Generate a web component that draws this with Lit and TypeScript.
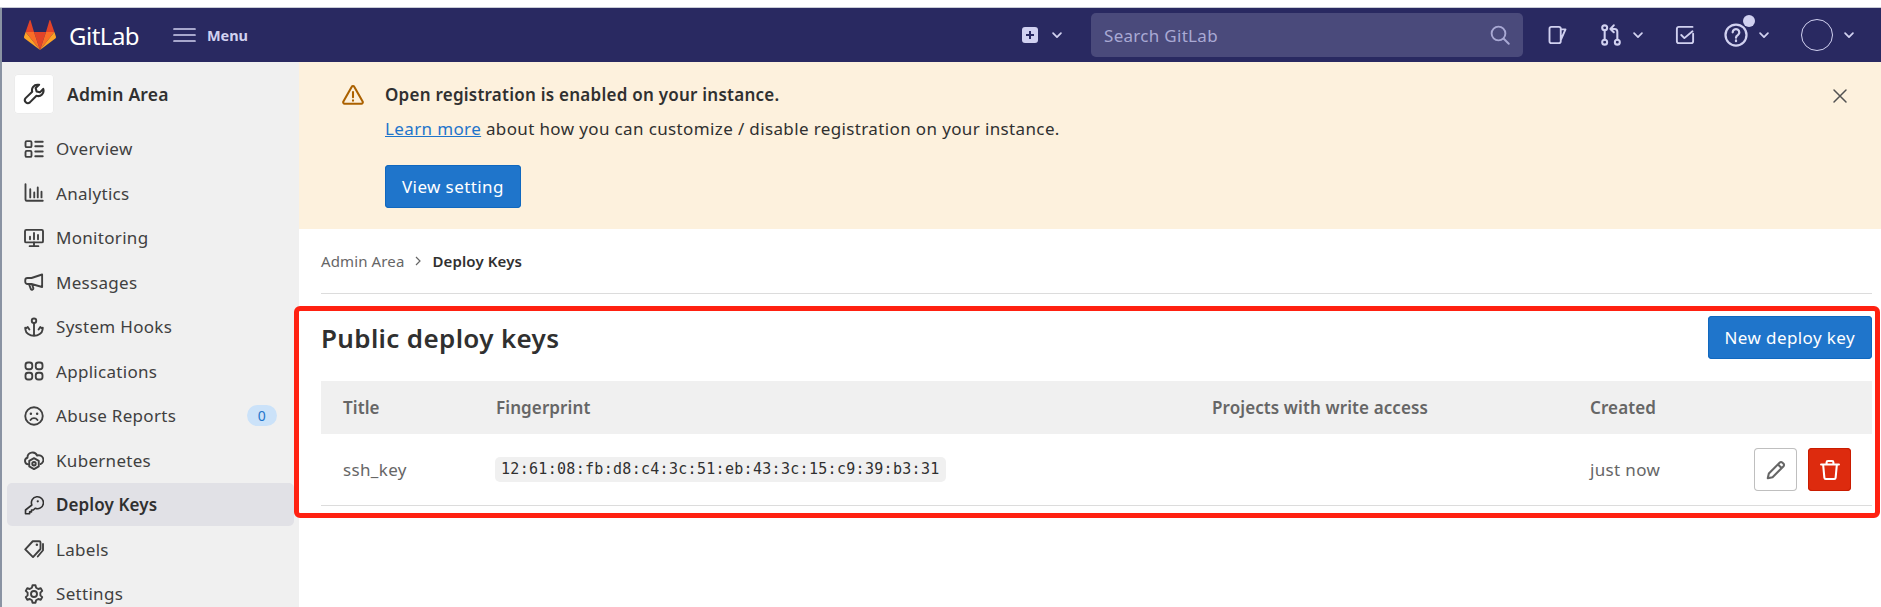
import { LitElement, html, css, svg } from "lit";
import { customElement } from "lit/decorators.js";

const ic: Record<string, unknown> = {
  wrench: svg`<path d="M10.6 1.3a3.9 3.9 0 0 0-3.9 5L1.9 11a2.2 2.2 0 0 0 3.1 3.1l4.8-4.8a3.9 3.9 0 0 0 4.9-5L12.3 6.8l-2.4-.7-.7-2.4 2.5-2.4a3.9 3.9 0 0 0-1.1 0z"/>`,
  overview: svg`<rect x="1.2" y="1.7" width="4.8" height="4.8" rx="1"/><rect x="1.2" y="9.5" width="4.8" height="4.8" rx="1"/><path d="M9 2.2h6M9 5.8h6M9 10h6M9 13.8h6"/>`,
  analytics: svg`<path d="M1.2 1v12.2a1 1 0 0 0 1 1H15M5 5v6.5M8.2 7.5v4M11 3.5v8M14 7v4.5"/>`,
  monitoring: svg`<rect x=".8" y="1.5" width="14.4" height="10" rx="1"/><path d="M4.5 14.5h7M8 11.5v3M4.8 9V7M8 9V4M11.2 9V5.5"/>`,
  messages: svg`<path d="M14.5 2 6 4.8H2.8A1.8 1.8 0 0 0 1 6.6v1.2a1.8 1.8 0 0 0 1.8 1.8H6l8.5 2.4zM4 9.7l1.5 4a1.1 1.1 0 0 0 2-.8L6.4 10"/>`,
  hooks: svg`<circle cx="8" cy="3" r="1.8"/><path d="M8 4.8V15M1 8.5l.2 1.8C1.5 13 4.5 15 8 15s6.5-2 6.8-4.7L15 8.5M1 9.5 3 8l1.3 2M15 9.5 13 8l-1.3 2"/>`,
  apps: svg`<rect x="1.2" y="1.2" width="5.4" height="5.4" rx="2"/><rect x="9.4" y="1.2" width="5.4" height="5.4" rx="2"/><rect x="1.2" y="9.4" width="5.4" height="5.4" rx="2"/><rect x="9.4" y="9.4" width="5.4" height="5.4" rx="2"/>`,
  abuse: svg`<circle cx="8" cy="8" r="7"/><path d="M5.2 11.2a3.4 3.4 0 0 1 5.6 0"/><path d="M5.5 6.2h.01M10.5 6.2h.01" stroke-width="2"/>`,
  kube: svg`<path d="M4 11.5H3.4a2.7 2.7 0 0 1-.6-5.3 4 4 0 0 1 7.7-1.7 3.4 3.4 0 0 1 2.7 6.8"/><path d="m8 6.5 3.8 2.2v4.4L8 15.3l-3.8-2.2V8.7z"/><circle cx="8" cy="11" r="1.4"/>`,
  key: svg`<path d="M6.3 8a4.8 4.8 0 1 1 2.6 2.6L7.5 12H6v1.5H4.5V15H1.2v-3z" stroke-width="1.3"/><path d="M11 5h.01" stroke-width="1.8"/>`,
  labels: svg`<path d="M1 8.3 7 1.8h5.2a1 1 0 0 1 1 1V8l-6 6.5z"/><path d="m11 14 4.2-5V4"/><path d="M10.3 4.5h.01" stroke-width="2"/>`,
  settings: svg`<circle cx="8" cy="8" r="2.4"/><path d="m6.8 1h2.4l.5 2 1.7 1 2-.6 1.2 2.1-1.5 1.4v2.2l1.5 1.4-1.2 2.1-2-.6-1.7 1-.5 2H6.8l-.5-2-1.7-1-2 .6-1.2-2.1 1.5-1.4V6.9L1.4 5.5l1.2-2.1 2 .6 1.7-1z"/>`,
  warn: svg`<path d="M7.1 2 1 12.8a1 1 0 0 0 .9 1.5h12.2a1 1 0 0 0 .9-1.5L8.9 2a1 1 0 0 0-1.8 0z"/><path d="M8 5.8v3.8M8 11.8v.4"/>`,
  close: svg`<path d="m2 2 12 12M14 2 2 14"/>`,
  search: svg`<circle cx="6.8" cy="6.8" r="5.5"/><path d="m11 11 4 4"/>`,
  chev: svg`<path d="m3.5 5.8 4.5 4.5 4.5-4.5" stroke-width="2"/>`,
  issues: svg`<path d="M2 3a1.5 1.5 0 0 1 1.5-1.5h6A1.5 1.5 0 0 1 11 3v10a1.5 1.5 0 0 1-1.5 1.5h-6A1.5 1.5 0 0 1 2 13zM11 3.5h3.8L11 12"/>`,
  mr: svg`<circle cx="3.4" cy="2.8" r="1.8"/><circle cx="3.4" cy="13.2" r="1.8"/><circle cx="12.6" cy="13.2" r="1.8"/><path d="M3.4 4.6v6.8M12.6 11.4V5.6a2 2 0 0 0-2-2H8M10 1 7.6 3.6 10 6"/>`,
  todo: svg`<path d="M14.5 7v6a1.5 1.5 0 0 1-1.5 1.5H3A1.5 1.5 0 0 1 1.5 13V3A1.5 1.5 0 0 1 3 1.5h11"/><path d="m5 8 2.5 2.5L14 5"/>`,
  help: svg`<circle cx="8" cy="8" r="7"/><path d="M5.8 6.2a2.2 2.2 0 1 1 3.4 1.9C8.4 8.6 8 9 8 9.8M8 11.6v.5"/>`,
  pencil: svg`<path d="M2 14l.8-3.5L10.8 2.5a1.2 1.2 0 0 1 1.7 0l1 1a1.2 1.2 0 0 1 0 1.7L5.5 13.2zM9.5 4l2.5 2.5"/>`,
  trash: svg`<path d="M1.5 4h13M5.5 4V2.5a1 1 0 0 1 1-1h3a1 1 0 0 1 1 1V4M3 4l.9 9.6a1 1 0 0 0 1 .9h6.2a1 1 0 0 0 1-.9L13 4"/>`,
};

const icon = (n: string, cls = "") =>
  html`<svg class="ico ${cls}" viewBox="0 0 16 16" fill="none" stroke="currentColor" stroke-width="1.5" stroke-linecap="round" stroke-linejoin="round">${ic[n]}</svg>`;

const NAV = [
  ["overview", "Overview"],
  ["analytics", "Analytics"],
  ["monitoring", "Monitoring"],
  ["messages", "Messages"],
  ["hooks", "System Hooks"],
  ["apps", "Applications"],
  ["abuse", "Abuse Reports"],
  ["kube", "Kubernetes"],
  ["key", "Deploy Keys"],
  ["labels", "Labels"],
  ["settings", "Settings"],
];

@customElement("app-root")
export class AppRoot extends LitElement {
  static styles = css`
    :host {
      display: block;
      position: relative;
      height: 607px;
      overflow: hidden;
      background: #fff;
      color: #303030;
      font-family: "Noto Sans", "Open Sans", sans-serif;
      font-size: 17px;
    }
    .ico { display: block; width: 20px; height: 20px; flex: none; }
    .strip { height: 7px; border-bottom: 1px solid #c9ccd6; box-sizing: content-box; }
    .frame { margin-left: 2px; box-shadow: -2px 0 0 #8a93a3; }

    .nav {
      height: 54px;
      background: #292961;
      color: #d1d1f0;
      display: flex;
      align-items: center;
      padding-left: 22px;
    }
    .logo { width: 32px; height: 30px; flex: none; }
    .word { color: #fff; font-size: 24px; margin-left: 13px; letter-spacing: -0.5px; width: 71px; }
    .burger { width: 24px; height: 16px; margin-left: 33px; flex: none; }
    .menu { font-size: 14.5px; font-weight: 700; margin-left: 10px; letter-spacing: -0.1px; }
    .spacer { flex: 1; }
    .plus { width: 16px; height: 16px; border-radius: 3px; background: #d1d1f0; color: #292961; position: relative; flex: none; }
    .plus svg { position: absolute; inset: 3px; width: 10px; height: 10px; }
    .chev { width: 14px; height: 14px; }
    .search {
      width: 432px;
      height: 44px;
      margin-left: 27px;
      box-sizing: border-box;
      background: #4a4a7b;
      border-radius: 5px;
      display: flex;
      align-items: center;
      justify-content: space-between;
      padding: 0 13px;
      color: #a9a9d4;
    }
    .search span { font-size: 17px; letter-spacing: 0.3px; }
    .i-issues { margin-left: 24px; }
    .i-mr { margin-left: 33px; width: 22px; height: 22px; }
    .i-todo { margin-left: 30px; }
    .help { position: relative; margin-left: 29px; width: 24px; height: 24px; flex: none; }
    .help svg { width: 24px; height: 24px; }
    .help::after {
      content: "";
      position: absolute;
      left: 19px;
      top: -8px;
      width: 12px;
      height: 12px;
      border-radius: 50%;
      background: #d1d1f0;
    }
    .avatar { width: 30px; height: 30px; border: 1px solid #d1d1f0; border-radius: 50%; margin-left: 30px; flex: none; }
    .mlc { margin-left: 9px; }
    .mlw { margin-left: 12px; }
    .mlh { margin-left: 9px; }
    .mle { margin-left: 9px; margin-right: 25px; }

    .body { display: flex; height: 545px; }
    .side {
      width: 297px;
      flex: none;
      background: #f0f0f0;
      padding: 12px 5px 0;
      box-sizing: border-box;
      overflow: hidden;
    }
    .ctx { display: flex; align-items: center; gap: 13px; padding-left: 7px; height: 40px; margin-bottom: 13px; }
    .tile {
      width: 40px;
      height: 40px;
      background: #fff;
      border-radius: 4px;
      display: flex;
      align-items: center;
      justify-content: center;
      box-shadow: 0 0 0 1px #ececec inset;
    }
    .tile svg { width: 22px; height: 22px; }
    .ctx b { font-weight: 600; font-size: 17.5px; letter-spacing: 0.2px; }
    .item {
      height: 43px;
      margin-bottom: 1.5px;
      display: flex;
      align-items: center;
      gap: 12px;
      padding: 0 17px;
      border-radius: 5px;
      color: #404040;
      letter-spacing: 0.3px;
    }
    .item.on { background: #e1e1e6; font-weight: 600; color: #303030; letter-spacing: 0.1px; }
    .badge {
      margin-left: auto;
      width: 30px;
      height: 21px;
      border-radius: 11px;
      background: #cbe2f9;
      color: #1f75cb;
      font-size: 14px;
      display: flex;
      align-items: center;
      justify-content: center;
    }

    main { flex: 1; min-width: 0; }
    .banner {
      height: 167px;
      box-sizing: border-box;
      background: #fdf1dd;
      padding: 16px 33px 0 43px;
      display: flex;
      gap: 21px;
    }
    .banner .warn { width: 22px; height: 22px; color: #ab6100; margin-top: 6px; }
    .bcol { flex: 1; }
    .btitle { font-weight: 600; line-height: 34px; letter-spacing: 0.24px; }
    .btext { line-height: 34px; letter-spacing: 0.37px; }
    .btext a { color: #1f75cb; text-decoration: underline; }
    .btn {
      display: inline-flex;
      align-items: center;
      height: 43px;
      box-sizing: border-box;
      padding: 0 17px;
      background: #1f75cb;
      color: #fff;
      border-radius: 4px;
      box-shadow: inset 0 0 0 1px #1068bf;
      letter-spacing: 0.4px;
    }
    .bcol .btn { margin-top: 19px; }
    .x { width: 16px; height: 16px; margin-top: 10px; color: #525252; }

    .wrap { padding: 0 9px 0 22px; }
    .crumb {
      height: 65px;
      box-sizing: border-box;
      border-bottom: 1px solid #dcdcdc;
      display: flex;
      align-items: center;
      gap: 9px;
      font-size: 15px;
      color: #666;
      letter-spacing: 0.12px;
    }
    .crumb b { color: #303030; font-weight: 600; }
    .crumb svg { width: 10px; height: 10px; }
    .head { display: flex; justify-content: space-between; align-items: center; padding: 22px 0; height: 43px; box-sizing: content-box; }
    h1 { margin: 0; font-size: 26px; font-weight: 600; letter-spacing: 0.35px; }
    .grid { display: grid; grid-template-columns: 153px 716px 378px 1fr; }
    .th {
      height: 53px;
      background: #f0f0f0;
      color: #666;
      font-weight: 600;
      letter-spacing: 0.1px;
      padding-left: 22px;
      display: flex;
      align-items: center;
    }
    .td {
      height: 72px;
      box-sizing: border-box;
      border-bottom: 1px solid #dcdcdc;
      padding-left: 22px;
      display: flex;
      align-items: center;
      color: #666;
      letter-spacing: 0.35px;
    }
    code {
      font-family: "DejaVu Sans Mono", "Liberation Mono", monospace;
      font-size: 15px;
      letter-spacing: 0.3px;
      line-height: 25px;
      color: #303030;
      background: #f0f0f0;
      border-radius: 5px;
      padding: 0 6px;
      margin-left: -1px;
    }
    .acts { justify-content: space-between; padding-right: 21px; }
    .acts div { display: flex; gap: 11px; margin-left: auto; }
    .ib {
      width: 43px;
      height: 43px;
      box-sizing: border-box;
      border-radius: 4px;
      display: flex;
      align-items: center;
      justify-content: center;
    }
    .ib svg { width: 22px; height: 22px; }
    .edit { background: #fff; color: #666; box-shadow: inset 0 0 0 1px #bfbfbf; }
    .del { background: #dd2b0e; color: #fff; box-shadow: inset 0 0 0 1px #c91c00; }

    .mark {
      position: absolute;
      left: 294px;
      top: 306px;
      width: 1586px;
      height: 212px;
      box-sizing: border-box;
      border: 5px solid #ff2111;
      border-radius: 6px;
      pointer-events: none;
    }
  `;

  render() {
    return html`
      <div class="strip"></div>
      <div class="frame">
        <header class="nav">
          <svg class="logo" viewBox="0 0 32 30">
            <path fill="#e24329" d="M16 30 10 12h12z" />
            <path fill="#fc6d26" d="M16 30 10 12H1.6zM16 30l6-18h8.4z" />
            <path fill="#fca326" d="M1.6 12 .1 16.6a1.6 1.6 0 0 0 .6 1.8L16 30zM30.4 12l1.5 4.6a1.6 1.6 0 0 1-.6 1.8L16 30z" />
            <path fill="#e24329" d="M1.6 12h8.4L6.6.5a.5.5 0 0 0-1 0zM30.4 12H22L25.4.5a.5.5 0 0 1 1 0z" />
          </svg>
          <span class="word">GitLab</span>
          <svg class="burger" viewBox="0 0 24 16" fill="none" stroke="currentColor" stroke-width="1.7" stroke-linecap="round"><path d="M1 2h21M1 8h21M1 14h21" /></svg>
          <span class="menu">Menu</span>
          <span class="spacer"></span>
          <span class="plus"><svg viewBox="0 0 10 10" fill="none" stroke="currentColor" stroke-width="2"><path d="M5 1v8M1 5h8" /></svg></span>
          <span class="mlw">${icon("chev", "chev")}</span>
          <div class="search"><span>Search GitLab</span>${icon("search")}</div>
          ${icon("issues", "i-issues")} ${icon("mr", "i-mr")}
          <span class="mlc">${icon("chev", "chev")}</span>
          ${icon("todo", "i-todo")}
          <span class="help">${icon("help")}</span>
          <span class="mlh">${icon("chev", "chev")}</span>
          <span class="avatar"></span>
          <span class="mle">${icon("chev", "chev")}</span>
        </header>
        <div class="body">
          <aside class="side">
            <div class="ctx"><span class="tile">${icon("wrench")}</span><b>Admin Area</b></div>
            ${NAV.map(
              ([i, t]) => html`<div class="item ${t === "Deploy Keys" ? "on" : ""}">
                ${icon(i)}<span>${t}</span>${t === "Abuse Reports" ? html`<span class="badge">0</span>` : ""}
              </div>`
            )}
          </aside>
          <main>
            <section class="banner">
              ${icon("warn", "warn")}
              <div class="bcol">
                <div class="btitle">Open registration is enabled on your instance.</div>
                <div class="btext"><a>Learn more</a> about how you can customize / disable registration on your instance.</div>
                <span class="btn">View setting</span>
              </div>
              ${icon("close", "x")}
            </section>
            <div class="wrap">
              <nav class="crumb"><span>Admin Area</span><svg viewBox="0 0 10 10" fill="none" stroke="#666" stroke-width="1.2"><path d="m3 1 4 4-4 4" /></svg><b>Deploy Keys</b></nav>
              <div class="head"><h1>Public deploy keys</h1><span class="btn">New deploy key</span></div>
              <div class="grid">
                <div class="th">Title</div>
                <div class="th">Fingerprint</div>
                <div class="th">Projects with write access</div>
                <div class="th">Created</div>
                <div class="td">ssh_key</div>
                <div class="td"><code>12:61:08:fb:d8:c4:3c:51:eb:43:3c:15:c9:39:b3:31</code></div>
                <div class="td"></div>
                <div class="td acts">
                  <span>just now</span>
                  <div><span class="ib edit">${icon("pencil")}</span><span class="ib del">${icon("trash")}</span></div>
                </div>
              </div>
            </div>
          </main>
        </div>
      </div>
      <div class="mark"></div>
    `;
  }
}
